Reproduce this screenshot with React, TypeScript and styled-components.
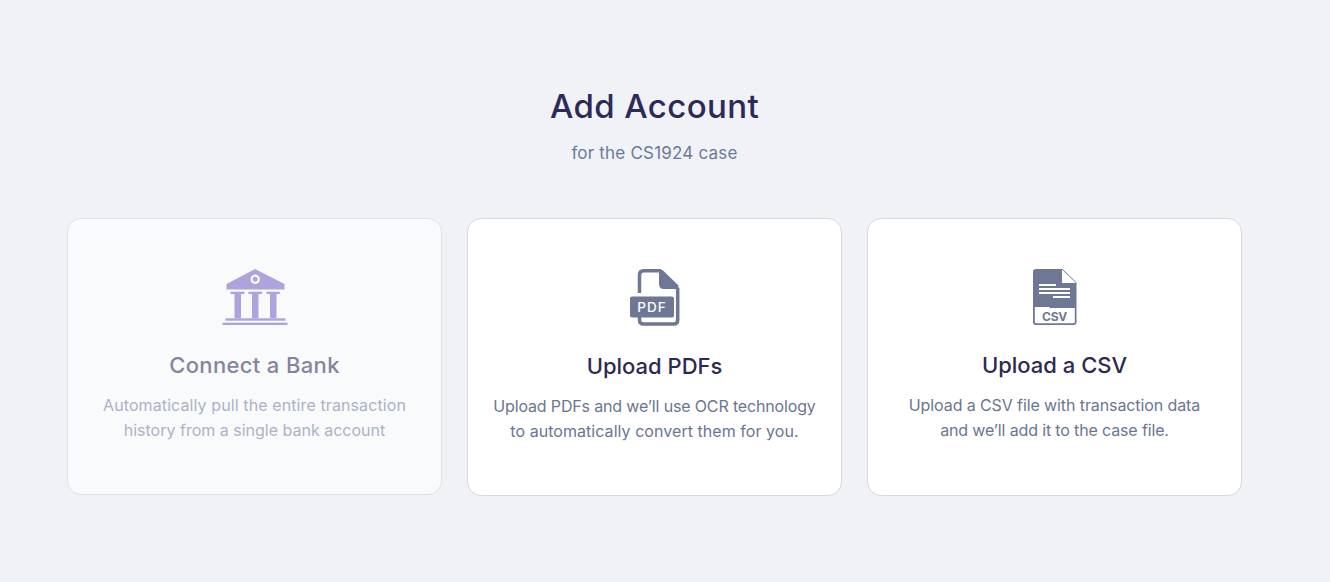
import React from "react";
import styled, { createGlobalStyle } from "styled-components";

const Global = createGlobalStyle`
  html, body { margin: 0; padding: 0; background: #f0f2f6; }
  body { font-family: "Inter", "Liberation Sans", sans-serif; }
`;

const Page = styled.main`
  box-sizing: border-box;
  width: 1330px;
  height: 582px;
  padding: 87px 0 0 67px;
  overflow: hidden;
`;

const Column = styled.div`
  width: 1175px;
  display: flex;
  flex-direction: column;
  align-items: center;
`;

const Title = styled.h1`
  margin: 0;
  font-size: 33px;
  line-height: 39px;
  font-weight: 530;
  letter-spacing: 0.4px;
  color: #2d2a5a;
`;

const Subtitle = styled.p`
  margin: 17px 0 0;
  font-size: 17px;
  line-height: 20px;
  font-weight: 400;
  letter-spacing: 0.2px;
  color: #6b7a99;
`;

const Cards = styled.div`
  margin-top: 55px;
  width: 100%;
  display: grid;
  grid-template-columns: repeat(3, 375px);
  gap: 25px;
  align-items: start;
`;

const Card = styled.article<{ $disabled?: boolean }>`
  box-sizing: border-box;
  height: ${(p) => (p.$disabled ? "277px" : "278px")};
  padding: 50px 16px 0;
  border: 1px solid ${(p) => (p.$disabled ? "#dfe2ea" : "#d5d8e2")};
  border-radius: 14px;
  background: ${(p) => (p.$disabled ? "#f9fafc" : "#ffffff")};
  display: flex;
  flex-direction: column;
  align-items: center;
  text-align: center;
`;

const IconSlot = styled.div`
  height: 58px;
  display: flex;
  align-items: center;
  justify-content: center;
`;

const CardTitle = styled.h2<{ $disabled?: boolean; $drop?: number }>`
  margin: ${(p) => 24 + (p.$drop ?? 0)}px 0 0;
  font-size: 22px;
  line-height: 28px;
  font-weight: 500;
  letter-spacing: ${(p) => (p.$disabled ? "0.35px" : "0")};
  color: ${(p) => (p.$disabled ? "#85849f" : "#2d2a50")};
`;

const CardText = styled.p<{ $disabled?: boolean }>`
  margin: 14px 0 0;
  font-size: 16px;
  line-height: 25.4px;
  color: ${(p) => (p.$disabled ? "#acb2c6" : "#6a7690")};
`;

const Line = styled.span<{ $track: number }>`
  display: block;
  letter-spacing: ${(p) => p.$track}px;
`;

const PdfLabel = styled.text`
  font-family: "Inter", "Liberation Sans", sans-serif;
  font-weight: 500;
  font-size: 13.5px;
  letter-spacing: 1px;
  fill: #ffffff;
`;

const CsvLabel = styled.text`
  font-family: "Inter", "Liberation Sans", sans-serif;
  font-weight: 700;
  font-size: 12px;
  letter-spacing: -0.3px;
  fill: #6e7793;
`;

const BankIcon = () => (
  <svg width="66" height="58" viewBox="0 0 66 58" fill="#aea3dc">
    <path
      fillRule="evenodd"
      d="M33 0 L62.5 15 V20.5 H4.5 V15 Z M33.2 5.6 a4.7 4.7 0 1 0 0.01 0 Z M33.2 7.8 a2.5 2.5 0 1 1 -0.01 0 Z"
    />
    <path d="M8.5 22.7 H22.5 V25 H19 V49.3 H12.5 V25 H8.5 Z" />
    <path d="M26.5 22.7 H40 V25 H36.5 V49.3 H30 V25 H26.5 Z" />
    <path d="M44.5 22.7 H57.8 V25 H54.5 V49.3 H48 V25 H44.5 Z" />
    <rect x="3.5" y="49.3" width="60" height="2.4" />
    <rect x="0.5" y="53.7" width="65" height="2.3" />
  </svg>
);

const PdfIcon = () => (
  <svg width="52" height="58" viewBox="0 0 52 58">
    <path
      d="M10.5 24 V6 Q10.5 1.75 14.5 1.75 H31 L48.7 20 V51 Q48.7 55 44.7 55 H14.5 Q10.5 55 10.5 51 V47"
      fill="none"
      stroke="#6e7793"
      strokeWidth="3.5"
    />
    <path d="M30 1 H33.5 V13 Q33.5 16 36.5 16 H49 V20 H35 Q30 20 30 15 Z M33.5 1 L50 17 H33.5 Z" fill="#6e7793" />
    <rect x="1" y="27.5" width="44" height="21" rx="2" fill="#6e7793" />
    <PdfLabel x="23" y="43" textAnchor="middle">PDF</PdfLabel>
  </svg>
);

const CsvIcon = () => (
  <svg width="44" height="58" viewBox="0 0 44 58">
    <path d="M3 0 H29 V14 H43.5 V53 Q43.5 56 40.5 56 H3 Q0 56 0 53 V3 Q0 0 3 0 Z" fill="#6e7793" />
    <path d="M29 0 L43.5 14" fill="none" stroke="#6e7793" strokeWidth="1" />
    <path d="M1.8 38 H16 L17 39 H41.8 V53 Q41.8 54.2 40.6 54.2 H3 Q1.8 54.2 1.8 53 Z" fill="#ffffff" />
    <rect x="6" y="15" width="17" height="2" fill="#ffffff" />
    <rect x="6" y="19" width="31" height="2" fill="#ffffff" />
    <rect x="6" y="23" width="31" height="2" fill="#ffffff" />
    <rect x="20" y="27" width="17" height="2" fill="#ffffff" />
    <CsvLabel x="21.5" y="52" textAnchor="middle">CSV</CsvLabel>
  </svg>
);

export default function App() {
  return (
    <Page>
      <Global />
      <Column>
        <Title>Add Account</Title>
        <Subtitle>for the CS1924 case</Subtitle>
        <Cards>
          <Card $disabled>
            <IconSlot><BankIcon /></IconSlot>
            <CardTitle $disabled>Connect a Bank</CardTitle>
            <CardText $disabled>
              <Line $track={0.1}>Automatically pull the entire transaction</Line>
              <Line $track={0}>history from a single bank account</Line>
            </CardText>
          </Card>
          <Card>
            <IconSlot><PdfIcon /></IconSlot>
            <CardTitle $drop={1}>Upload PDFs</CardTitle>
            <CardText>
              <Line $track={-0.15}>Upload PDFs and we’ll use OCR technology</Line>
              <Line $track={0.05}>to automatically convert them for you.</Line>
            </CardText>
          </Card>
          <Card>
            <IconSlot><CsvIcon /></IconSlot>
            <CardTitle>Upload a CSV</CardTitle>
            <CardText>
              <Line $track={-0.1}>Upload a CSV file with transaction data</Line>
              <Line $track={-0.14}>and we’ll add it to the case file.</Line>
            </CardText>
          </Card>
        </Cards>
      </Column>
    </Page>
  );
}
